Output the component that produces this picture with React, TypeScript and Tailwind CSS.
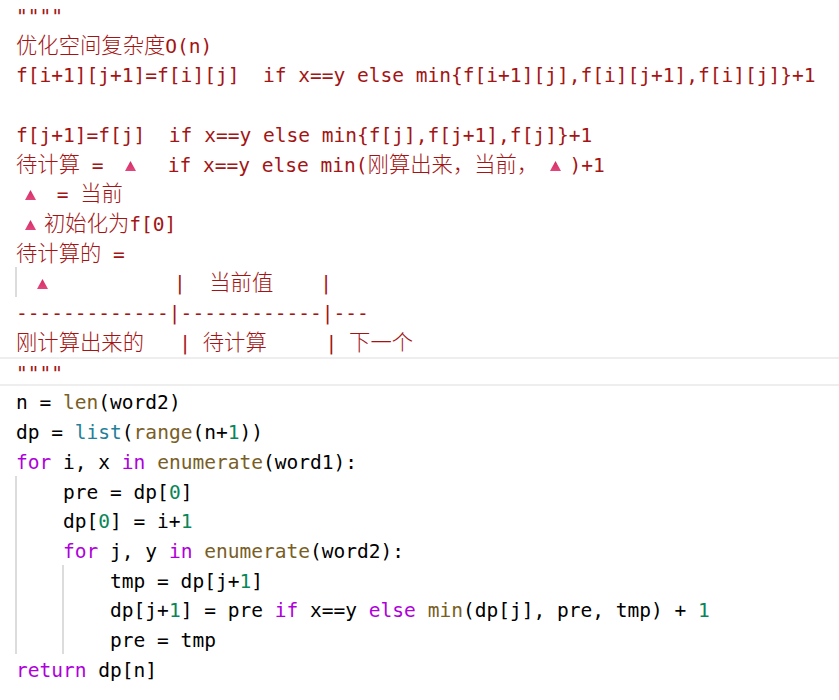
import type { ReactNode } from "react";

// VS Code Light+ colours
const STR = "text-[#a31515]";
const KW = "text-[#af00db]";
const FN = "text-[#795e26]";
const CLS = "text-[#267f99]";
const NUM = "text-[#098658]";

function Line({
  children,
  guides = [],
  current = false,
}: {
  children?: ReactNode;
  guides?: string[];
  current?: boolean;
}) {
  return (
    <div className="relative h-[29.73px] whitespace-pre pl-4">
      {current && <div className="absolute inset-0 border-y-2 border-[#eeeeee]" />}
      {guides.map((g) => (
        <div key={g} className={`absolute top-0 h-full w-[2px] bg-[#dcdcdc] ${g}`} />
      ))}
      <span className="relative top-[2px]">{children}</span>
    </div>
  );
}

// CJK text: full-width, 21.33px like the editor's fallback font
function C({ children }: { children: ReactNode }) {
  return (
    <span className="font-['Noto_Sans_CJK_SC',sans-serif] text-[21.33px] leading-none font-light">
      {children}
    </span>
  );
}

function Tri({ className }: { className: string }) {
  return (
    <svg className={`inline-block align-[1px] ${className}`} width="11" height="10" viewBox="0 0 11 10">
      <defs>
        <linearGradient id="tri" x1="0" y1="0" x2="0" y2="1">
          <stop offset="0" stopColor="#d42c66" />
          <stop offset="1" stopColor="#e2467c" />
        </linearGradient>
      </defs>
      <polygon points="5.5,0 11,10 0,10" fill="url(#tri)" />
    </svg>
  );
}

export default function App() {
  return (
    <div className="h-[700px] w-[839px] overflow-hidden bg-white font-['DejaVu_Sans_Mono','Noto_Sans_CJK_SC',monospace] text-[19.55px] leading-[29.73px] text-black">
      {/* docstring */}
      <div className={STR}>
        <Line>{'""""'}</Line>
        <Line>
          <C>优化空间复杂度</C>O(n)
        </Line>
        <Line>{"f[i+1][j+1]=f[i][j]  if x==y else min{f[i+1][j],f[i][j+1],f[i][j]}+1"}</Line>
        <Line />
        <Line>{"f[j+1]=f[j]  if x==y else min{f[j],f[j+1],f[j]}+1"}</Line>
        <Line>
          <C>待计算</C>
          {" = "}
          <Tri className="ml-[10px] mr-[31.4px]" />
          {"if x==y else min("}
          <C>刚算出来，当前，</C>
          <Tri className="ml-[12px] mr-[8.2px]" />
          {")+1"}
        </Line>
        <Line>
          <Tri className="ml-[9px] mr-[9px]" />
          {" = "}
          <C>当前</C>
        </Line>
        <Line>
          <Tri className="ml-[9px] mr-[8px]" />
          <C>初始化为</C>f[0]
        </Line>
        <Line>
          <C>待计算的</C>
          {" ="}
        </Line>
        <Line guides={["left-[15px]"]}>
          <Tri className="ml-[21px] mr-[126px]" />
          {"|  "}
          <C>当前值</C>
          {"    |"}
        </Line>
        <Line>{"-------------|------------|---"}</Line>
        <Line>
          <C>刚计算出来的</C>
          {"   | "}
          <C>待计算</C>
          {"     | "}
          <C>下一个</C>
        </Line>
        <Line current>{'""""'}</Line>
      </div>

      {/* code */}
      <Line>
        {"n = "}
        <span className={FN}>len</span>
        {"(word2)"}
      </Line>
      <Line>
        {"dp = "}
        <span className={CLS}>list</span>
        {"("}
        <span className={FN}>range</span>
        {"(n+"}
        <span className={NUM}>1</span>
        {"))"}
      </Line>
      <Line>
        <span className={KW}>for</span>
        {" i, x "}
        <span className={KW}>in</span> <span className={FN}>enumerate</span>
        {"(word1):"}
      </Line>
      <Line guides={["left-[15px]"]}>
        {"    pre = dp["}
        <span className={NUM}>0</span>
        {"]"}
      </Line>
      <Line guides={["left-[15px]"]}>
        {"    dp["}
        <span className={NUM}>0</span>
        {"] = i+"}
        <span className={NUM}>1</span>
      </Line>
      <Line guides={["left-[15px]"]}>
        {"    "}
        <span className={KW}>for</span>
        {" j, y "}
        <span className={KW}>in</span> <span className={FN}>enumerate</span>
        {"(word2):"}
      </Line>
      <Line guides={["left-[15px]", "left-[62px]"]}>
        {"        tmp = dp[j+"}
        <span className={NUM}>1</span>
        {"]"}
      </Line>
      <Line guides={["left-[15px]", "left-[62px]"]}>
        {"        dp[j+"}
        <span className={NUM}>1</span>
        {"] = pre "}
        <span className={KW}>if</span>
        {" x==y "}
        <span className={KW}>else</span> <span className={FN}>min</span>
        {"(dp[j], pre, tmp) + "}
        <span className={NUM}>1</span>
      </Line>
      <Line guides={["left-[15px]", "left-[62px]"]}>{"        pre = tmp"}</Line>
      <Line>
        <span className={KW}>return</span>
        {" dp[n]"}
      </Line>
    </div>
  );
}
